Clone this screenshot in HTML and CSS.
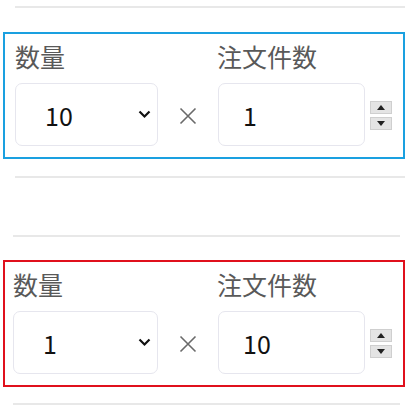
FILE: index.html
```html
<html>
  <head>
    <title>注文数量</title>
    <link rel="stylesheet" href="styles.css">
  </head>
  <body>
    <div class="order-list">
      <hr class="sep sep-top">

      <div class="qty-box qty-box-active">
        <span class="qty-label">数量</span>
        <span class="qty-label qty-label-count">注文件数</span>

        <div class="qty-select">
          <span class="qty-value">10</span>
          <svg class="chevron" width="13" height="9" viewBox="0 0 13 9">
            <path d="M1.5 1.5 L6.5 6.5 L11.5 1.5" fill="none" stroke="#111" stroke-width="2.2"/>
          </svg>
        </div>
        <div class="qty-times">
          <svg width="18" height="18" viewBox="0 0 18 18">
            <path d="M1.5 1.5 L16.5 16.5 M16.5 1.5 L1.5 16.5" stroke="#6a6a6a" stroke-width="1.6"/>
          </svg>
        </div>
        <div class="qty-input"><span class="qty-value">1</span></div>
        <div class="spinner">
          <span class="spin-btn spin-up"><svg width="8" height="5" viewBox="0 0 8 5"><path d="M0 5 L4 0 L8 5 Z" fill="#222"/></svg></span>
          <span class="spin-btn spin-down"><svg width="8" height="5" viewBox="0 0 8 5"><path d="M0 0 L4 5 L8 0 Z" fill="#222"/></svg></span>
        </div>
      </div>

      <hr class="sep sep-mid">
      <div class="blank-row"></div>
      <hr class="sep sep-low">

      <div class="qty-box qty-box-error">
        <span class="qty-label">数量</span>
        <span class="qty-label qty-label-count">注文件数</span>

        <div class="qty-select">
          <span class="qty-value">1</span>
          <svg class="chevron" width="13" height="9" viewBox="0 0 13 9">
            <path d="M1.5 1.5 L6.5 6.5 L11.5 1.5" fill="none" stroke="#111" stroke-width="2.2"/>
          </svg>
        </div>
        <div class="qty-times">
          <svg width="18" height="18" viewBox="0 0 18 18">
            <path d="M1.5 1.5 L16.5 16.5 M16.5 1.5 L1.5 16.5" stroke="#6a6a6a" stroke-width="1.6"/>
          </svg>
        </div>
        <div class="qty-input"><span class="qty-value">10</span></div>
        <div class="spinner">
          <span class="spin-btn spin-up"><svg width="8" height="5" viewBox="0 0 8 5"><path d="M0 5 L4 0 L8 5 Z" fill="#222"/></svg></span>
          <span class="spin-btn spin-down"><svg width="8" height="5" viewBox="0 0 8 5"><path d="M0 0 L4 5 L8 0 Z" fill="#222"/></svg></span>
        </div>
      </div>

      <hr class="sep sep-bottom">
    </div>
  </body>
</html>
```

FILE: styles.css
```css
body {
  margin: 0;
  background-color: #ffffff;
  font-family: "Noto Sans CJK JP", "Noto Sans", sans-serif;
}

.order-list {
  display: flex;
  flex-direction: column;
  width: 410px;
}

.sep {
  border: none;
  border-top: 2px solid #e8e8e8;
  margin: 0;
  height: 0;
}

.sep-top {
  margin-top: 6px;
  margin-left: 15px;
  margin-right: 5px;
}

.sep-mid {
  margin-top: 17px;
  margin-left: 15px;
  margin-right: 5px;
}

.blank-row {
  height: 57px;
}

.sep-low {
  margin-left: 13px;
  margin-right: 10px;
}

.sep-bottom {
  margin-top: 16px;
  margin-left: 13px;
  margin-right: 10px;
}

.qty-box {
  display: grid;
  grid-template-columns: 143px 60px 147px 22px;
  grid-template-rows: 34px 63px;
  row-gap: 10px;
  column-gap: 0;
  align-items: center;
  box-sizing: border-box;
  width: 402px;
  height: 127px;
  margin-left: 3px;
  padding: 5px 10px 11px 10px;
  border: 2px solid #1aa0e0;

  .qty-label {
    grid-row: 1;
    grid-column: 1;
    font-size: 25px;
    line-height: 34px;
    color: #595959;
  }

  .qty-label-count {
    grid-column: 3;
    margin-left: -1px;
  }

  .qty-select,
  .qty-input {
    grid-row: 2;
    box-sizing: border-box;
    height: 63px;
    display: flex;
    align-items: center;
    border: 1px solid #e6e6ee;
    border-radius: 7px;
  }

  .qty-select {
    grid-column: 1;
    padding-left: 29px;
    padding-right: 6px;
    justify-content: space-between;
  }

  .qty-input {
    grid-column: 3;
    padding-left: 24px;
  }

  .qty-value {
    font-size: 25px;
    color: #111111;
  }

  .qty-times {
    grid-row: 2;
    grid-column: 2;
    display: flex;
    justify-content: center;
    padding-top: 2px;
  }

  .spinner {
    grid-row: 2;
    grid-column: 4;
    display: flex;
    flex-direction: column;
    gap: 3px;
    margin-left: 5px;
    margin-top: 1px;
  }

  .spin-btn {
    box-sizing: border-box;
    display: flex;
    align-items: center;
    justify-content: center;
    width: 22px;
    height: 13px;
    background-color: #e4e4e4;
    border: 1px solid #cfcfcf;
  }
}

.qty-box-active {
  margin-top: 24px;
}

.qty-box-error {
  margin-top: 23px;
  border-color: #e0101c;

  .qty-label {
    margin-left: -2px;
  }

  .qty-label-count {
    margin-left: -1px;
  }

  .qty-select {
    margin-left: -2px;
    width: 145px;
  }
}
```
